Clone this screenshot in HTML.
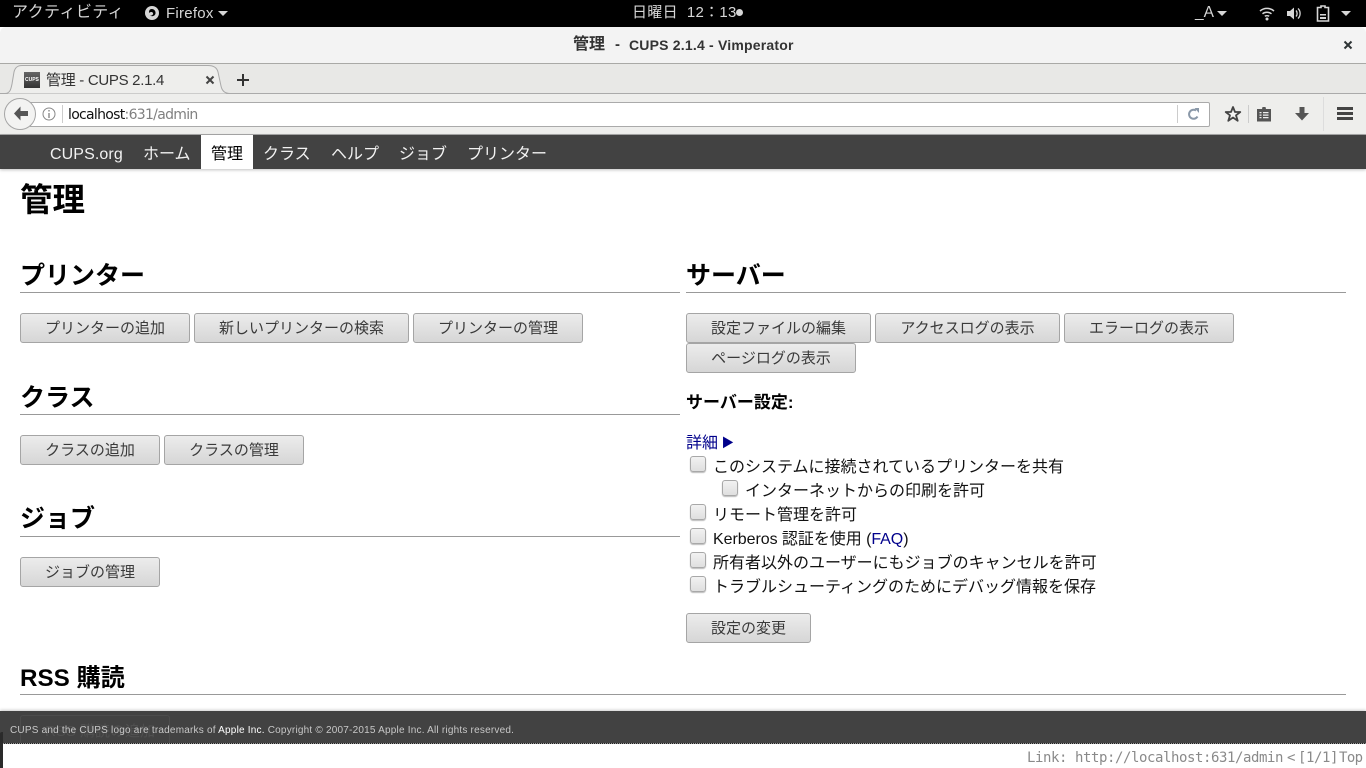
<!DOCTYPE html>
<html lang="ja"><head><meta charset="utf-8"><title>管理 - CUPS 2.1.4</title>
<style>
html,body{margin:0;padding:0;width:1366px;height:768px;overflow:hidden;background:#fff}
body{position:relative;font-family:"Liberation Sans","Noto Sans CJK JP",sans-serif;color:#000}
div,a,span.t,svg{position:absolute;white-space:nowrap}
.bar{left:0;width:1366px}
.tp{color:#d6d6d6;font-size:15px;line-height:18px;top:4px}
.nav{top:140px;height:29px;line-height:30px;font-size:16px;color:#f2f2f2}
h1,h2{position:absolute;margin:0;font-weight:bold;white-space:nowrap}
h2{font-size:25px;line-height:32px;left:20px}
.hr{height:1px;background:#999}
.b{height:28px;border:1px solid #a5a5a5;border-radius:3px;background:linear-gradient(#ececec,#d6d6d6);font-size:15px;line-height:29px;text-align:center;color:#3a3a3a;box-sizing:content-box}
.cb{width:14px;height:14px;border:1px solid #a8a8a8;border-radius:3px;background:linear-gradient(#f2f2f2,#dfdfdf);box-shadow:0 1px 1px #bbb}
.l{font-size:16px;line-height:24px;color:#111}
.blue{color:#00008b}
</style></head><body>
<div class="bar" style="top:0;height:27px;background:#000"></div>
<div class="tp" style="left:12px;font-size:16px;top:4px;letter-spacing:.4px">アクティビティ</div>
<svg style="left:144px;top:5px" width="16" height="16" viewBox="0 0 16 16"><circle cx="8" cy="8" r="7" fill="#d6d6d6"/><path d="M6 4.500C9 3 12 5.500 11.500 8.500 11 11 8 12 6 10.500 8 11 9.500 9.500 9 8 8 6.500 6 7 5 8 5 6.500 5 5.500 6 4.500Z" fill="#000"/></svg>
<div class="tp" style="left:166px;top:5px;letter-spacing:.25px">Firefox</div>
<svg style="left:218px;top:11px" width="10" height="6"><path d="M0 0H10L5 5Z" fill="#d6d6d6"/></svg>
<div class="tp" style="left:632px;top:4px;font-size:15px;letter-spacing:.3px">日曜日&nbsp; 12：13</div>
<svg style="left:735px;top:8px" width="9" height="9"><circle cx="4.500" cy="4.500" r="3.500" fill="#d6d6d6"/></svg>
<div class="tp" style="left:1195px;top:4px;font-size:15.5px">_A</div>
<svg style="left:1217px;top:11px" width="10" height="6"><path d="M0 0H10L5 5Z" fill="#d6d6d6"/></svg>
<svg style="left:1259px;top:6px" width="16" height="15" viewBox="0 0 16 15" fill="none" stroke="#d6d6d6" stroke-width="1.500"><path d="M1 5C5 1.500 11 1.500 15 5M3.500 7.800C6 5.800 10 5.800 12.500 7.800M5.800 10.300C7 9.500 9 9.500 10.200 10.300"/><circle cx="8" cy="13" r="1.500" fill="#d6d6d6" stroke="none"/></svg>
<svg style="left:1286px;top:6px" width="16" height="15" viewBox="0 0 16 15"><path d="M1 5H4L8 1.500V13.500L4 10H1Z" fill="#d6d6d6"/><path d="M10 4.500C11.500 6 11.500 9 10 10.500M12 2.500C14.800 5 14.800 10 12 12.500" fill="none" stroke="#d6d6d6" stroke-width="1.300"/></svg>
<svg style="left:1316px;top:5px" width="14" height="17" viewBox="0 0 14 17"><path d="M5 1H9V2.500H12.500V16H1.500V2.500H5Z" fill="none" stroke="#d6d6d6" stroke-width="1.600"/><path d="M4 9H10V10.500H4ZM4 12H10V14H4Z" fill="#d6d6d6"/></svg>
<svg style="left:1341px;top:11px" width="10" height="6"><path d="M0 0H10L5 5Z" fill="#d6d6d6"/></svg>

<div class="bar" style="top:27px;height:36px;background:#f3f3f3;border-radius:6px 6px 0 0"></div>
<div style="left:573px;top:35px;font-size:16px;line-height:20px;font-weight:bold;color:#333">管理</div>
<div style="left:615px;top:35px;font-size:15px;line-height:20px;font-weight:bold;color:#333">-</div>
<div style="left:629px;top:36px;font-size:14px;line-height:18px;font-weight:bold;color:#333;letter-spacing:.2px">CUPS 2.1.4 - Vimperator</div>
<svg style="left:1343px;top:40px" width="10" height="10"><path d="M1.500 1.500L8.500 8.500M8.500 1.500L1.500 8.500" stroke="#2e3436" stroke-width="2"/></svg>
<div class="bar" style="top:63px;height:1px;background:#a9a9a6"></div>
<div class="bar" style="top:64px;height:30px;background:#e8e8e6"></div>
<div class="bar" style="top:93px;height:1px;background:#aaa"></div>
<svg style="left:0;top:64px" width="240" height="31" viewBox="0 0 240 31"><path d="M0 29.500H5C10 29.500 11 25 12 20L14 8C15 4 17 1.500 22 1.500H208C214 1.500 217 4 218 8L221 22C222 27 225 29.500 230 29.500" fill="#eeeeec" stroke="#a9a9a9"/><rect x="0" y="29.600" width="5" height="1" fill="#aaa"/></svg>
<div style="left:24px;top:72px;width:16px;height:16px;background:linear-gradient(#666,#333)"><div style="left:1px;top:5px;font-size:5px;line-height:6px;color:#fff;font-weight:bold">CUPS</div></div>
<div style="left:46px;top:71px;font-size:15px;line-height:20px;color:#333;letter-spacing:-.3px">管理 - CUPS 2.1.4</div>
<svg style="left:205px;top:75px" width="10" height="10"><path d="M1.500 1.500L8.500 8.500M8.500 1.500L1.500 8.500" stroke="#444" stroke-width="2"/></svg>
<svg style="left:236px;top:73px" width="14" height="14"><path d="M7 1V13M1 7H13" stroke="#333" stroke-width="2"/></svg>

<div class="bar" style="top:94px;height:40px;background:#eeeeec"></div>
<div class="bar" style="top:134px;height:1px;background:#aaa"></div>
<div style="left:30px;top:102px;width:1178px;height:23px;background:#fff;border:1px solid #aaa;border-radius:0 2px 2px 0"></div>
<div style="left:4px;top:98px;width:30px;height:30px;border:1px solid #a5a5a5;border-radius:50%;background:#f3f3f2"></div>
<svg style="left:12px;top:105px" width="18" height="17" viewBox="0 0 18 17"><path d="M8.500 1.500L2 8.500L8.500 15.500V11H16V6H8.500Z" fill="#555"/></svg>
<svg style="left:42px;top:107px" width="14" height="14" viewBox="0 0 14 14"><circle cx="7" cy="7" r="6" fill="none" stroke="#888" stroke-width="1"/><path d="M6.300 3H7.700V4.500H6.300ZM6.300 6H7.700V11H6.300Z" fill="#888"/></svg>
<div style="left:62px;top:105px;width:1px;height:18px;background:#ccc"></div>
<div style="left:68px;top:106px;font-size:14px;line-height:18px;color:#111;font-family:'DejaVu Sans',sans-serif;letter-spacing:-.7px">localhost<span style="color:#808080">:631/admin</span></div>
<div style="left:1177px;top:105px;width:1px;height:18px;background:#ccc"></div>
<svg style="left:1187px;top:107px" width="13" height="14" viewBox="0 0 13 14"><path d="M10.500 9.500A4.500 4.500 0 1 1 9 3.500" fill="none" stroke="#8a98a8" stroke-width="2"/><path d="M7.500 1L12 1V6Z" fill="#8a98a8"/></svg>
<svg style="left:1224px;top:105px" width="18" height="18" viewBox="0 0 18 18"><path d="M9 2L11 7H16.300L12 10.300L13.700 15.800L9 12.500L4.300 15.800L6 10.300L1.700 7H7Z" fill="#f3f3f2" stroke="#444" stroke-width="1.800" stroke-linejoin="round"/></svg>
<div style="left:1248px;top:105px;width:1px;height:18px;background:#ccc"></div>
<svg style="left:1257px;top:106px" width="14" height="16" viewBox="0 0 14 16"><path d="M5.500 1H8.500L9 3H14V15.500H0V3H5Z" fill="#555"/><path d="M2.500 6H4.500V7.200H2.500ZM6 6H11.500V7.200H6ZM2.500 8.500H4.500V9.700H2.500ZM6 8.500H11.500V9.700H6ZM2.500 11H4.500V12.200H2.500ZM6 11H11.500V12.200H6Z" fill="#eee"/></svg>
<svg style="left:1295px;top:106px" width="14" height="15" viewBox="0 0 14 15"><path d="M4.500 1H9.500V7H14L7 14.500L0 7H4.500Z" fill="#555"/></svg>
<div style="left:1323px;top:97px;width:1px;height:34px;background:#ddd"></div>
<div style="left:1337px;top:107px;width:16px;height:3px;background:#444"></div>
<div style="left:1337px;top:112px;width:16px;height:3px;background:#444"></div>
<div style="left:1337px;top:117px;width:16px;height:3px;background:#444"></div>

<div class="bar" style="top:135px;height:34px;background:#424242;box-shadow:0 1px 3px rgba(0,0,0,.25)"></div>
<div style="left:201px;top:135px;width:52px;height:34px;background:#fff"></div>
<div class="nav" style="left:50px;letter-spacing:.1px">CUPS.org</div>
<div class="nav" style="left:143px">ホーム</div>
<div class="nav" style="left:211px;color:#000">管理</div>
<div class="nav" style="left:263px">クラス</div>
<div class="nav" style="left:331px">ヘルプ</div>
<div class="nav" style="left:399px">ジョブ</div>
<div class="nav" style="left:467px">プリンター</div>

<h1 style="left:20px;top:179px;font-size:32.5px;line-height:42px">管理</h1>
<h2 style="top:260px">プリンター</h2><div class="hr" style="left:20px;top:292px;width:660px"></div>
<div class="b" style="left:20px;top:313px;width:168px">プリンターの追加</div>
<div class="b" style="left:194px;top:313px;width:213px">新しいプリンターの検索</div>
<div class="b" style="left:413px;top:313px;width:168px">プリンターの管理</div>
<h2 style="top:382px">クラス</h2><div class="hr" style="left:20px;top:414px;width:660px"></div>
<div class="b" style="left:20px;top:435px;width:138px">クラスの追加</div>
<div class="b" style="left:164px;top:435px;width:138px">クラスの管理</div>
<h2 style="top:503px">ジョブ</h2><div class="hr" style="left:20px;top:536px;width:660px"></div>
<div class="b" style="left:20px;top:557px;width:138px">ジョブの管理</div>

<h2 style="left:686px;top:260px">サーバー</h2><div class="hr" style="left:686px;top:292px;width:660px"></div>
<div class="b" style="left:686px;top:313px;width:183px">設定ファイルの編集</div>
<div class="b" style="left:875px;top:313px;width:183px">アクセスログの表示</div>
<div class="b" style="left:1064px;top:313px;width:168px">エラーログの表示</div>
<div class="b" style="left:686px;top:343px;width:168px">ページログの表示</div>
<div class="l" style="left:686px;top:391px;font-weight:bold;color:#000;font-size:17px">サーバー設定:</div>
<div class="l blue" style="left:686px;top:432px">詳細 <span style="font-size:12.500px;position:relative;top:-1px;left:-1px">▶</span></div>
<div class="cb" style="left:690px;top:456px"></div><div class="l" style="left:713px;top:456px">このシステムに接続されているプリンターを共有</div>
<div class="cb" style="left:722px;top:480px"></div><div class="l" style="left:745px;top:480px">インターネットからの印刷を許可</div>
<div class="cb" style="left:690px;top:504px"></div><div class="l" style="left:713px;top:504px">リモート管理を許可</div>
<div class="cb" style="left:690px;top:528px"></div><div class="l" style="left:713px;top:528px;letter-spacing:-.05px">Kerberos 認証を使用 (<span class="blue">FAQ</span>)</div>
<div class="cb" style="left:690px;top:552px"></div><div class="l" style="left:713px;top:552px">所有者以外のユーザーにもジョブのキャンセルを許可</div>
<div class="cb" style="left:690px;top:576px"></div><div class="l" style="left:713px;top:576px">トラブルシューティングのためにデバッグ情報を保存</div>
<div class="b" style="left:686px;top:613px;width:123px">設定の変更</div>

<h2 style="top:663px;font-size:24.2px">RSS 購読</h2><div class="hr" style="left:20px;top:694px;width:1326px"></div>

<div class="bar" style="top:711px;height:33px;background:#424242;box-shadow:0 -1px 3px rgba(0,0,0,.2)"></div>
<div style="left:20px;top:715px;width:148px;height:29px;border:1px solid #4c4c4c;border-bottom:0;border-radius:3px 3px 0 0"></div>
<div style="left:45px;top:722px;font-size:15px;line-height:20px;color:#505050">RSS 購読の追加</div>
<div style="left:10px;top:724px;font-size:10px;line-height:13px;color:#c8c8c8;letter-spacing:.21px">CUPS and the CUPS logo are trademarks of <span style="color:#fff">Apple Inc.</span> Copyright © 2007-2015 Apple Inc. All rights reserved.</div>
<div class="bar" style="top:744px;height:24px;background:#fff"></div>
<div class="bar" style="top:743px;height:1px;background:repeating-linear-gradient(90deg,#222 0 1px,#999 1px 2px)"></div>
<div style="left:0;top:732px;width:3px;height:36px;background:#2a2a2a;border-radius:2px 0 0 0"></div>
<div style="left:1027px;top:750px;font-family:'DejaVu Sans Mono','Liberation Mono',monospace;font-size:14px;line-height:17px;color:#8a8a8a;letter-spacing:-.43px">Link: http://localhost:631/admin</div>
<div style="left:1287px;top:750px;font-family:'DejaVu Sans Mono','Liberation Mono',monospace;font-size:14px;line-height:17px;color:#8a8a8a;letter-spacing:-.43px">&lt;</div>
<div style="left:1298px;top:750px;font-family:'DejaVu Sans Mono','Liberation Mono',monospace;font-size:14px;line-height:17px;color:#8a8a8a;letter-spacing:-.43px">[1/1]</div>
<div style="left:1339px;top:750px;font-family:'DejaVu Sans Mono','Liberation Mono',monospace;font-size:14px;line-height:17px;color:#8a8a8a;letter-spacing:-.6px">Top</div>
</body></html>
